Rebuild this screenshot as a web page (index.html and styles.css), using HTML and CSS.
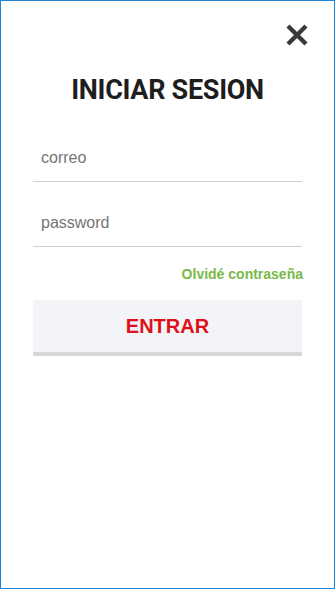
FILE: index.html
```html
<!DOCTYPE html>
<html lang="es">
<head>
<meta charset="utf-8">
<title>Iniciar sesión</title>
<link rel="stylesheet" href="styles.css">
</head>
<body>
<div class="frame">
  <div class="top">
    <button class="close" aria-label="Cerrar">
      <svg width="22" height="22" viewBox="0 0 22 22"><path d="M2 2 L20 20 M20 2 L2 20" stroke="#3a3a3a" stroke-width="4.4" stroke-linecap="butt"/></svg>
    </button>
  </div>
  <h1 class="title">INICIAR SESION</h1>
  <form class="form">
    <div class="field"><input type="text" placeholder="correo"></div>
    <div class="field"><input type="password" placeholder="password"></div>
    <a class="forgot" href="#">Olvidé contraseña</a>
    <button type="button" class="submit">ENTRAR</button>
  </form>
</div>
</body>
</html>
```
FILE: styles.css
```css
html, body {
  margin: 0;
  padding: 0;
  background: #ffffff;
}
.frame {
  box-sizing: border-box;
  width: 335px;
  height: 589px;
  border: 1px solid #1f84d6;
  padding: 0 32px;
  font-family: Roboto, "Liberation Sans", sans-serif;
}
.top {
  display: flex;
  justify-content: flex-end;
  padding-top: 23px;
  margin-right: -6px;
}
.close {
  border: 0;
  background: none;
  padding: 0;
  width: 22px;
  height: 22px;
  display: block;
  cursor: pointer;
}
.close svg { display: block; }
.title {
  margin: 28px 0 0;
  text-align: center;
  font-family: Roboto, "Liberation Sans", sans-serif;
  font-weight: 700;
  font-size: 27px;
  line-height: 32px;
  color: #1e1e1e;
  letter-spacing: -0.3px;
}
.form {
  display: flex;
  flex-direction: column;
  margin-top: 31px;
}
.field {
  border-bottom: 1px solid #cfcfcf;
  height: 44px;
  margin-bottom: 20px;
  display: flex;
  align-items: flex-start;
}
.field input {
  border: 0;
  outline: none;
  background: transparent;
  padding: 0 0 0 8px;
  width: 100%;
  font-family: "Liberation Sans", Arial, sans-serif;
  font-size: 16px;
  line-height: 20px;
  color: #333;
  margin-top: 11px;
}
.field input::placeholder { color: #757575; }
.forgot {
  align-self: flex-end;
  margin-right: -1px;
  margin-top: -1px;
  font-family: "Liberation Sans", Arial, sans-serif;
  font-weight: 700;
  font-size: 14px;
  line-height: 16px;
  color: #7ab948;
  text-decoration: none;
}
.submit {
  margin-top: 18px;
  width: 269px;
  height: 56px;
  border: 0;
  border-bottom: 4px solid #d7d7d9;
  background: #f3f4f7;
  color: #e0101a;
  font-family: "Liberation Sans", Arial, sans-serif;
  font-weight: 700;
  font-size: 20px;
  padding: 0;
  cursor: pointer;
}
```
